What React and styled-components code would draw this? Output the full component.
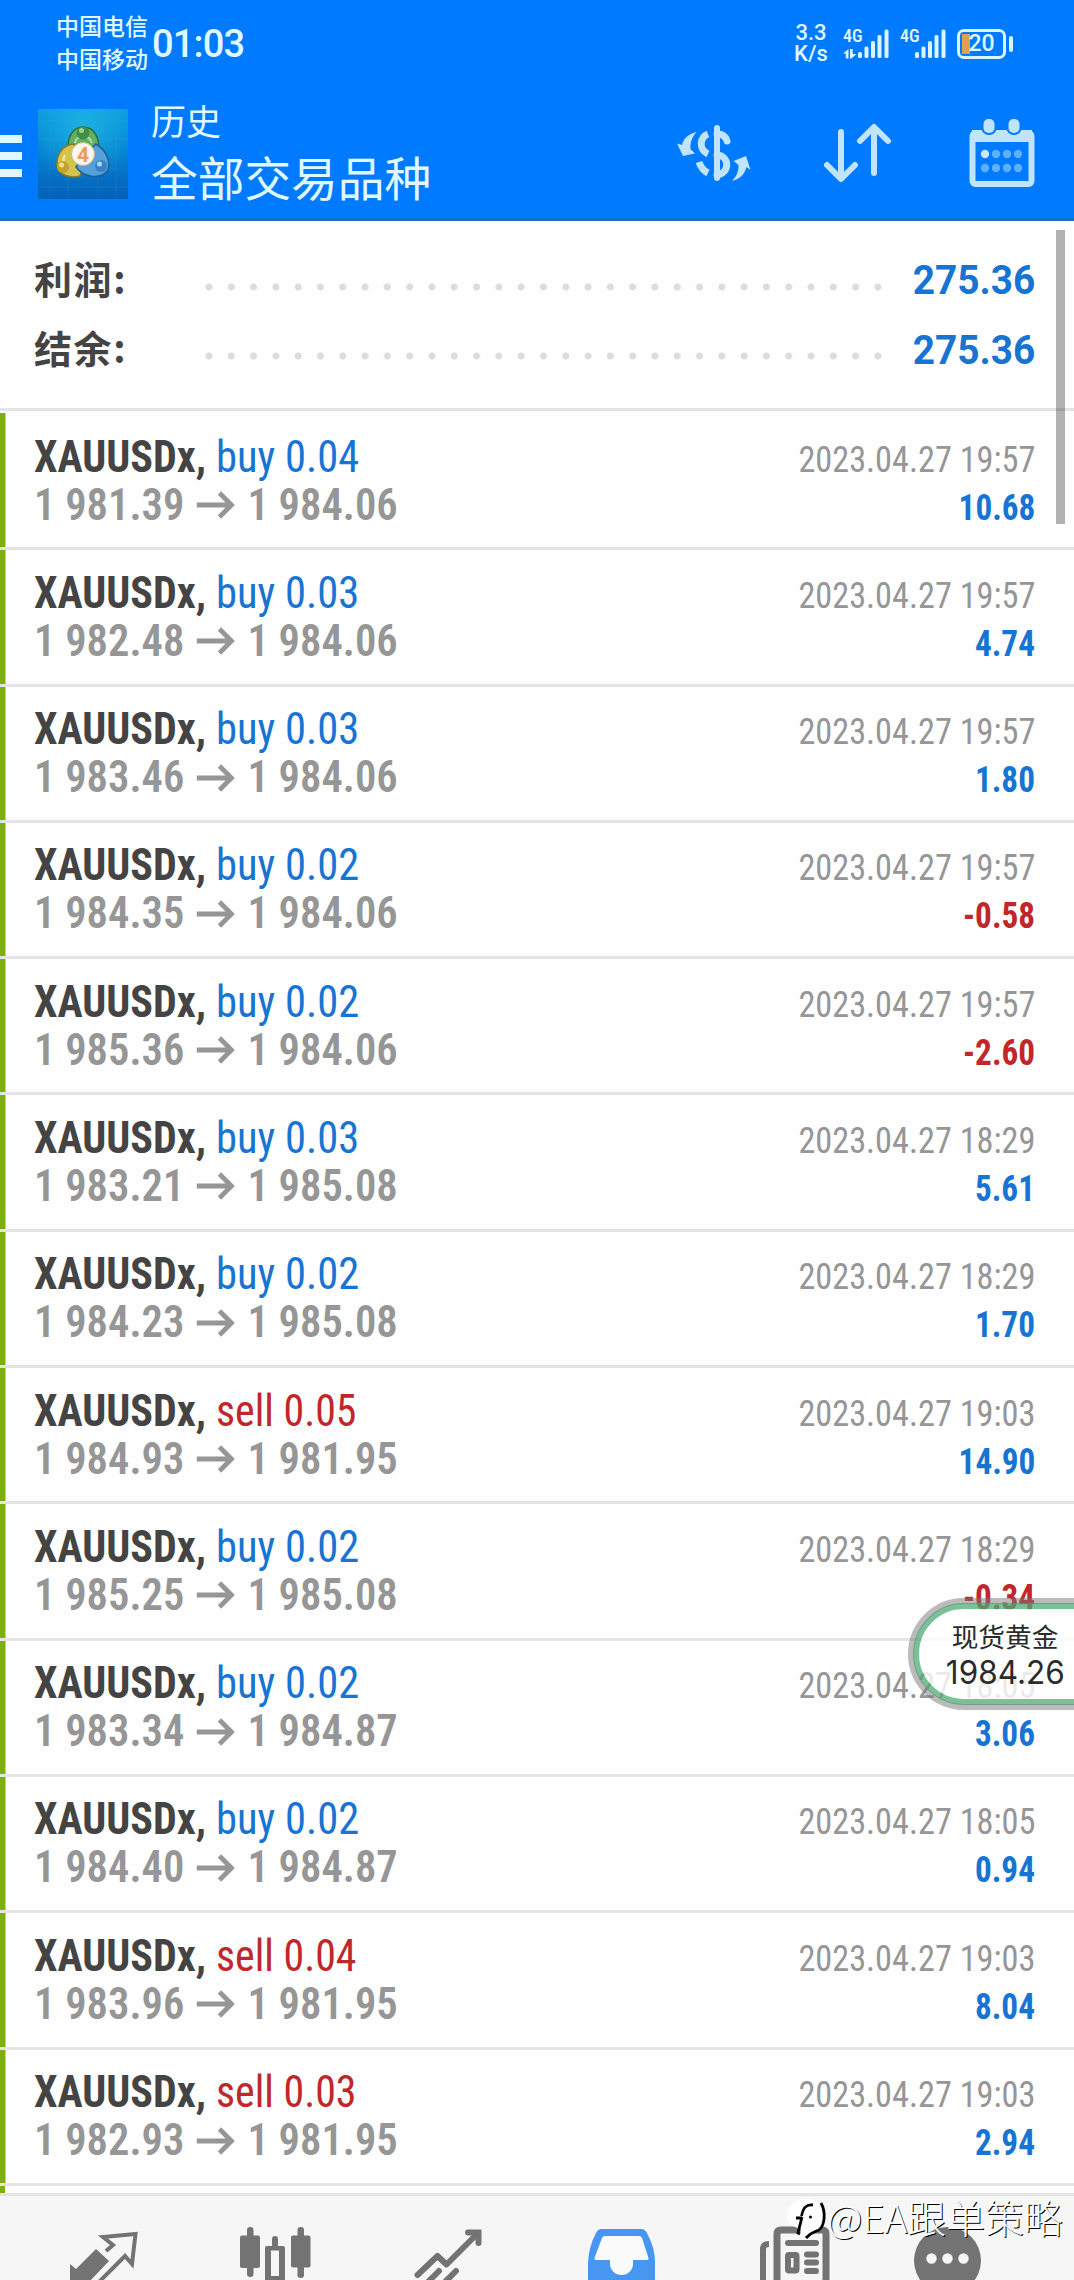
import React from 'react';
import styled, { createGlobalStyle } from 'styled-components';

const BLUE = '#1774d2';
const RED = '#c0262a';

const trades = [
  { id: 1, side: 'buy', lots: '0.04', open: '1 981.39', close: '1 984.06', time: '2023.04.27 19:57', profit: '10.68' },
  { id: 2, side: 'buy', lots: '0.03', open: '1 982.48', close: '1 984.06', time: '2023.04.27 19:57', profit: '4.74' },
  { id: 3, side: 'buy', lots: '0.03', open: '1 983.46', close: '1 984.06', time: '2023.04.27 19:57', profit: '1.80' },
  { id: 4, side: 'buy', lots: '0.02', open: '1 984.35', close: '1 984.06', time: '2023.04.27 19:57', profit: '-0.58' },
  { id: 5, side: 'buy', lots: '0.02', open: '1 985.36', close: '1 984.06', time: '2023.04.27 19:57', profit: '-2.60' },
  { id: 6, side: 'buy', lots: '0.03', open: '1 983.21', close: '1 985.08', time: '2023.04.27 18:29', profit: '5.61' },
  { id: 7, side: 'buy', lots: '0.02', open: '1 984.23', close: '1 985.08', time: '2023.04.27 18:29', profit: '1.70' },
  { id: 8, side: 'sell', lots: '0.05', open: '1 984.93', close: '1 981.95', time: '2023.04.27 19:03', profit: '14.90' },
  { id: 9, side: 'buy', lots: '0.02', open: '1 985.25', close: '1 985.08', time: '2023.04.27 18:29', profit: '-0.34' },
  { id: 10, side: 'buy', lots: '0.02', open: '1 983.34', close: '1 984.87', time: '2023.04.27 18:05', profit: '3.06' },
  { id: 11, side: 'buy', lots: '0.02', open: '1 984.40', close: '1 984.87', time: '2023.04.27 18:05', profit: '0.94' },
  { id: 12, side: 'sell', lots: '0.04', open: '1 983.96', close: '1 981.95', time: '2023.04.27 19:03', profit: '8.04' },
  { id: 13, side: 'sell', lots: '0.03', open: '1 982.93', close: '1 981.95', time: '2023.04.27 19:03', profit: '2.94' },
];

const totals = [
  { label: '利润:', value: '275.36' },
  { label: '结余:', value: '275.36' },
];

const LogoIcon = () => (
  <svg width="90" height="90" viewBox="0 0 90 90">
    <defs>
      <linearGradient id="logoBg" x1="0" y1="0" x2="0" y2="1">
        <stop offset="0" stopColor="#0a9be0" />
        <stop offset="0.5" stopColor="#0580cf" />
        <stop offset="1" stopColor="#0560b8" />
      </linearGradient>
      <radialGradient id="logoGlow" cx="0.5" cy="0.2" r="0.6">
        <stop offset="0" stopColor="#22b8e4" stopOpacity="0.8" />
        <stop offset="1" stopColor="#22b8e4" stopOpacity="0" />
      </radialGradient>
    </defs>
    <rect width="90" height="90" fill="url(#logoBg)" />
    <rect width="90" height="90" fill="url(#logoGlow)" />
    <path d="M12 0V90M30 0V90M60 0V90M78 0V90M0 12H90M0 30H90M0 60H90M0 78H90" stroke="#46b4ea" strokeOpacity="0.15" />
    <g strokeWidth="1.500">
      <path d="M30 42C29 28 35 18 45 18C56 18 62 28 61 44L45 48Z" fill="#64b063" stroke="#2c6f3c" />
      <path d="M35 35C24 36 18 47 19 57C21 66 32 70 42 67L48 46Z" fill="#d3c44e" stroke="#7f7b25" />
      <path d="M58 35C68 41 73 52 70 61C63 71 46 69 38 58L46 46Z" fill="#55a0d8" stroke="#1d5f9c" />
    </g>
    <path d="M37 34C38 26 51 25 54 34" fill="none" stroke="#b5dba3" strokeWidth="2" />
    <path d="M27 46C25 50 25 53 27 56" fill="none" stroke="#f3e99c" strokeWidth="2" />
    <circle cx="45" cy="24" r="6.500" fill="#3f8f49" />
    <circle cx="43.500" cy="21.500" r="2.500" fill="#9bd08f" />
    <circle cx="25" cy="58" r="6" fill="#c4a32c" />
    <circle cx="23.500" cy="56" r="2.500" fill="#f1e28a" />
    <circle cx="63" cy="57" r="6" fill="#3583c6" />
    <circle cx="61.500" cy="55" r="2.500" fill="#a9d8f5" />
    <circle cx="45" cy="45" r="11.500" fill="#fdf6ee" stroke="#c9b68c" />
    <text x="45" y="52.500" textAnchor="middle" fontFamily="Roboto" fontWeight="700" fontSize="21" fill="#ec9c5c">4</text>
  </svg>
);

const CurrencyIcon = () => (
  <svg width="78" height="60" viewBox="0 0 78 60" fill="none" stroke="#bfe4fc" strokeWidth="6" strokeLinecap="round">
    <path d="M42 5V55" />
    <path d="M33 11C25 14 23 26 33 31" strokeLinecap="butt" strokeWidth="7" />
    <path d="M42 11C48 11 51 14 52 18" strokeWidth="7" />
    <path d="M24 39C26 45 29 48 33 50" strokeWidth="7" strokeLinecap="butt" />
    <path d="M42 32C55 33 55 50 42 52" strokeWidth="7" />
    <path d="M21.500 9C12 11 8 17 7 22L2 20.500L8 33L20 30.500L15.500 26C15 20 17 14 21.500 9Z" fill="#bfe4fc" stroke="none" />
    <path d="M57 58C66 56 70 50 71.500 44L75.500 47L71 33L58.500 38L63.500 42C63.500 48 62 53 57 58Z" fill="#bfe4fc" stroke="none" />
  </svg>
);

const SortIcon = () => (
  <svg width="72" height="62" viewBox="0 0 72 62" fill="none" stroke="#bfe4fc" strokeWidth="6" strokeLinecap="round" strokeLinejoin="round">
    <path d="M19 10V56M5 43L19 57L33 43" />
    <path d="M52 51V6M38 19L52 5L66 19" />
  </svg>
);

const CalendarIcon = () => (
  <svg width="66" height="68" viewBox="0 0 66 68">
    <rect x="3.500" y="14" width="59" height="51" rx="3" fill="none" stroke="#bfe4fc" strokeWidth="6" />
    <path d="M3 11H63V23H3Z" fill="#bfe4fc" />
    <rect x="12" y="-2" width="16" height="18" rx="8" fill="#007aff" />
    <rect x="37" y="-2" width="16" height="18" rx="8" fill="#007aff" />
    <rect x="14.500" y="0" width="11" height="14" rx="5" fill="#bfe4fc" />
    <rect x="39.500" y="0" width="11" height="14" rx="5" fill="#bfe4fc" />
    {[16, 27, 38, 49].map((x) => (
      <g key={x} fill="#5eb0fd">
        <circle cx={x} cy="35" r="4.200" fill={x === 16 ? '#c8e9fd' : '#5eb0fd'} />
        <circle cx={x} cy="49" r="4.200" />
      </g>
    ))}
  </svg>
);

const SignalIcon = () => (
  <svg width="32" height="30" viewBox="0 0 32 30" fill="#d9f5ff">
    <rect x="0" y="23" width="4" height="6" rx="1.500" />
    <rect x="6.500" y="17.500" width="4" height="11.500" rx="1.500" />
    <rect x="13" y="12" width="4" height="17" rx="1.500" />
    <rect x="19.500" y="6" width="4" height="23" rx="1.500" />
    <rect x="26.500" y="0.500" width="4" height="28.500" rx="1.500" />
  </svg>
);

const DataArrows = () => (
  <svg width="14" height="10" viewBox="0 0 14 10" fill="#d9f5ff">
    <path d="M0 4.500L5.500 0V9.500H2.800V4.500Z" />
    <path d="M7 0H9.700V5H13.500L8.500 9.500H7Z" />
  </svg>
);

const PriceArrow = () => (
  <svg width="40" height="28" viewBox="0 0 40 28" fill="none" stroke="#969696" strokeWidth="5">
    <path d="M0 14H36M24 2L36.500 14L24 26" />
  </svg>
);

const QuotesIcon = () => (
  <svg width="173" height="84" viewBox="0 0 173 84">
    <path d="M53 68L59 73L79 53L92 65L72 86H53Z" fill="#737373" />
    <path d="M89 55L96 49L86 41L118.500 38L115 68L108 60L80 88" fill="none" stroke="#737373" strokeWidth="4" />
  </svg>
);

const ChartIcon = () => (
  <svg width="173" height="84" viewBox="0 0 173 84" fill="#737373">
    <rect x="50" y="39.500" width="20" height="32.500" rx="2" />
    <rect x="57" y="31" width="6.500" height="50" rx="3" />
    <rect x="82" y="40" width="6" height="14" rx="3" />
    <path d="M77 50H93Q95 50 95 52V90H75V52Q75 50 77 50ZM81 54.500V80H89V54.500Z" fillRule="evenodd" />
    <rect x="101" y="39.500" width="19.500" height="32" rx="2" />
    <rect x="107.500" y="31" width="6.500" height="51" rx="3" />
  </svg>
);

const TradeIcon = () => (
  <svg width="173" height="84" viewBox="0 0 173 84" fill="none" stroke="#737373" strokeWidth="6">
    <path d="M54.500 79L74.500 60L83.500 68.500L114 38" strokeLinejoin="round" strokeLinecap="round" />
    <path d="M105 36.500H115.500V47" strokeLinecap="round" />
    <path d="M76 75L62 89M93 75L79 89" strokeLinecap="round" />
  </svg>
);

const InboxIcon = () => (
  <svg width="173" height="84" viewBox="0 0 173 84">
    <path d="M65 33H105Q109 33 111 37Q119 52 119 66V90H52V66Q53 50 60 37Q62 33 65 33Z" fill="#4797f2" />
    <path d="M69 40H103Q105 40 106 42L112.500 62Q113 64 111 64H97V68A11.500 11 0 0 1 74 68V64H60Q58 64 58.500 62L66 42Q67 40 69 40Z" fill="#fafafa" />
  </svg>
);

const NewsIcon = () => (
  <svg width="173" height="84" viewBox="0 0 173 84" fill="none" stroke="#737373" strokeWidth="6">
    <path d="M54 88V53Q54 48 60 48" />
    <path d="M68 88V38Q68 34 72 34H113Q117 34 117 38V88" strokeWidth="7" />
    <rect x="79" y="59" width="8.500" height="15.500" rx="1" />
    <path d="M79 47H107M98 58.500H107M98 66.500H107M98 75H107" strokeLinecap="round" />
  </svg>
);

const MoreIcon = () => (
  <svg width="134" height="84" viewBox="0 0 134 84">
    <circle cx="65.500" cy="64.500" r="33.500" fill="#737373" />
    <path d="M36 78L40 90H60Z" fill="#737373" />
    <circle cx="49.500" cy="62.500" r="5.200" fill="#f6f6f6" />
    <circle cx="65.500" cy="62.500" r="5.200" fill="#f6f6f6" />
    <circle cx="81.500" cy="62.500" r="5.200" fill="#f6f6f6" />
  </svg>
);

const WatermarkIcon = () => (
  <svg width="44" height="46" viewBox="0 0 44 46">
    <path d="M20 3C31 3 38 10 38 20C38 30 33 35 27 36L22 43L19 38H14L15 33C6 31 1 26 1 20C1 10 9 3 20 3Z" fill="#fff" />
    <path d="M35 7C40 16 39 29 33 34C29 36 25 36 20 42" fill="none" stroke="#000" strokeWidth="2.800" />
    <path d="M27 9C20 8 17 12 15.500 20M10 22H16M16 21L12 37L14 38" fill="none" stroke="#000" strokeWidth="2.800" />
    <circle cx="24.500" cy="21" r="1.500" fill="#000" />
  </svg>
);

const tabs = [QuotesIcon, ChartIcon, TradeIcon, InboxIcon, NewsIcon, MoreIcon];

const App = () => {
  return (
    <Screen>
      <GlobalStyle />
      <Header>
        <StatusBar>
          <Carriers>
            <span>中国电信</span>
            <span>中国移动</span>
          </Carriers>
          <Clock>01:03</Clock>
          <StatusRight>
            <Speed>
              <span>3.3</span>
              <span>K/s</span>
            </Speed>
            <Network>
              <NetworkType>
                <span>4G</span>
                <DataArrows />
              </NetworkType>
              <SignalIcon />
            </Network>
            <Network>
              <NetworkType>
                <span>4G</span>
              </NetworkType>
              <SignalIcon />
            </Network>
            <Battery>20</Battery>
            <BatteryTip />
          </StatusRight>
        </StatusBar>
        <AppBar>
          <MenuButton>
            <i />
            <i />
            <i />
          </MenuButton>
          <LogoIcon />
          <Titles>
            <Title>历史</Title>
            <SubTitle>全部交易品种</SubTitle>
          </Titles>
          <Actions>
            <CurrencyIcon />
            <SortIcon />
            <CalendarIcon />
          </Actions>
        </AppBar>
      </Header>

      <Content>
        <Summary>
          {totals.map((total) => (
            <SummaryRow key={total.label}>
              <SummaryLabel>{total.label}</SummaryLabel>
              <Dots />
              <SummaryValue>{total.value}</SummaryValue>
            </SummaryRow>
          ))}
        </Summary>
        {trades.map((trade) => (
          <TradeRow key={trade.id}>
            <TradeInfo>
              <TradeLine>
                <Symbol>XAUUSDx,</Symbol>
                <Side $sell={trade.side === 'sell'}>{trade.side} {trade.lots}</Side>
              </TradeLine>
              <Prices>
                <span>{trade.open}</span>
                <PriceArrow />
                <span>{trade.close}</span>
              </Prices>
            </TradeInfo>
            <TradeResult>
              <Time>{trade.time}</Time>
              <Profit $loss={trade.profit.startsWith('-')}>{trade.profit}</Profit>
            </TradeResult>
          </TradeRow>
        ))}
        <NextRow />
        <ScrollThumb />
      </Content>

      <TabBar>
        {tabs.map((Icon, i) => (
          <Icon key={i} />
        ))}
      </TabBar>

      <PriceBubble>
        <BubbleName>现货黄金</BubbleName>
        <BubblePrice>1984.26</BubblePrice>
      </PriceBubble>
      <Watermark>
        <WatermarkIcon />
        <span>@EA跟单策略</span>
      </Watermark>
    </Screen>
  );
};

export default App;

const GlobalStyle = createGlobalStyle`
  body {
    margin: 0;
    background: #fefefe;
    font-family: Roboto, "Noto Sans CJK SC", sans-serif;
  }
  svg {
    display: block;
    flex: none;
  }
`;

const Screen = styled.div`
  position: relative;
  display: flex;
  flex-direction: column;
  width: 1074px;
  height: 2280px;
  overflow: hidden;
  background: #fefefe;
`;

const Header = styled.header`
  box-sizing: border-box;
  height: 221px;
  flex: none;
  background: #007aff;
  border-bottom: 3px solid #1a6fc4;
`;

const StatusBar = styled.div`
  display: flex;
  align-items: center;
  box-sizing: border-box;
  height: 87px;
  padding: 0 61px 0 56px;
  color: #e0f8ff;
`;

const Carriers = styled.div`
  display: flex;
  flex-direction: column;
  margin-top: -4px;
  font: 500 23px/33px "Noto Sans CJK SC", sans-serif;
`;

const Clock = styled.div`
  margin-left: 4px;
  font: 500 38px/44px Roboto, sans-serif;
  letter-spacing: -0.8px;
`;

const StatusRight = styled.div`
  display: flex;
  align-items: center;
  margin-left: auto;
`;

const Speed = styled.div`
  display: flex;
  flex-direction: column;
  align-items: center;
  width: 34px;
  margin-right: 15px;
  font: 500 22px/20.500px Roboto, sans-serif;
`;

const Network = styled.div`
  display: flex;
  align-items: flex-end;
  height: 30px;
  margin-right: 10px;
`;

const NetworkType = styled.div`
  display: flex;
  flex-direction: column;
  justify-content: space-between;
  width: 15px;
  height: 30px;
  font: 500 18px/14px "Roboto Condensed", sans-serif;
`;

const Battery = styled.div`
  box-sizing: border-box;
  width: 49px;
  height: 30px;
  border: 3px solid #d9f5ff;
  border-radius: 7px;
  background: linear-gradient(#e0a052, #e0a052) 2px center / 8px 20px no-repeat;
  font: 500 23px/24px Roboto, sans-serif;
  text-align: center;
`;

const BatteryTip = styled.div`
  width: 4px;
  height: 16px;
  margin-left: 3px;
  border-radius: 2px;
  background: #d9f5ff;
`;

const AppBar = styled.div`
  display: flex;
  align-items: flex-start;
  height: 131px;
  padding-top: 22px;

  > svg {
    margin-left: 16px;
  }
`;

const MenuButton = styled.div`
  display: flex;
  flex-direction: column;
  gap: 9px;
  width: 22px;
  margin-top: 26px;

  i {
    height: 8px;
    background: #e0f8ff;
  }
`;

const Titles = styled.div`
  display: flex;
  flex-direction: column;
  margin: -13px 0 0 23px;
  color: #e0f8ff;
  font-family: "Noto Sans CJK SC", sans-serif;
`;

const Title = styled.div`
  font-size: 35px;
  line-height: 48px;
`;

const SubTitle = styled.div`
  font-size: 46.700px;
  line-height: 64px;
`;

const Actions = styled.div`
  display: flex;
  align-items: center;
  margin: 10px 39px 0 auto;

  svg:nth-child(1) {
    margin-right: 69px;
  }
  svg:nth-child(2) {
    margin-right: 75px;
  }
`;

const Content = styled.main`
  position: relative;
  display: flex;
  flex-direction: column;
  flex: none;
  height: 1972px;
  overflow: hidden;
`;

const Summary = styled.section`
  box-sizing: border-box;
  height: 190px;
  flex: none;
  margin-bottom: 2px;
  padding: 24px 39px 0 34px;
  border-bottom: 3px solid #e4e4e4;
`;

const SummaryRow = styled.div`
  display: flex;
  align-items: center;
  height: 69.500px;
`;

const SummaryLabel = styled.div`
  width: 164px;
  margin-top: -4px;
  color: #444;
  font: 700 38px/56px "Noto Sans CJK SC", sans-serif;
  letter-spacing: 1.600px;
`;

const Dots = styled.div`
  width: 690px;
  height: 8px;
  margin-top: 14px;
  background: radial-gradient(circle at 11px 4px, #dcdcdc 3px, transparent 4px) 0 0 / 22.300px 8px repeat-x;
`;

const SummaryValue = styled.div`
  margin: 3px 0 0 auto;
  color: ${BLUE};
  font: 700 40px/50px Roboto, sans-serif;
  transform: scaleX(0.97);
  transform-origin: right;
`;

const TradeRow = styled.div`
  display: flex;
  justify-content: space-between;
  box-sizing: border-box;
  height: 136.300px;
  flex: none;
  padding: 17px 39px 0 33.500px;
  border-bottom: 3px solid #e4e4e4;
  background: linear-gradient(#7db00e, #7db00e) left top / 5.500px 100% no-repeat padding-box;
  font-family: "Roboto Condensed", sans-serif;

  &:nth-child(2) {
    height: 137.300px;
    padding-top: 18px;
  }
`;

const TradeInfo = styled.div`
  display: flex;
  flex-direction: column;
  padding-top: 1.500px;
`;

const TradeLine = styled.div`
  display: flex;
  gap: 13px;
  font-size: 44.500px;
  line-height: 48px;
`;

/* the app's face is a little narrower than Roboto Condensed */
const Symbol = styled.span`
  width: 169px;
  color: #444;
  font-weight: 700;
  transform: scaleX(0.945);
  transform-origin: left;
`;

const Side = styled.span`
  color: ${(p) => (p.$sell ? RED : BLUE)};
  transform: scaleX(${(p) => (p.$sell ? 0.94 : 0.955)});
  transform-origin: left;
`;

const Prices = styled.div`
  display: flex;
  align-items: center;
  gap: 13px;
  color: #969696;
  font-size: 44.500px;
  font-weight: 600;
  line-height: 49px;
  transform: scaleX(0.956);
  transform-origin: left;
`;

const TradeResult = styled.div`
  display: flex;
  flex-direction: column;
  align-items: flex-end;
  padding-top: 4.500px;
  font-size: 36.500px;
  line-height: 48px;
`;

const Time = styled.span`
  color: #969696;
  transform: scaleX(0.939);
  transform-origin: right;
`;

const Profit = styled.span`
  color: ${(p) => (p.$loss ? RED : BLUE)};
  font-weight: 700;
  transform: scaleX(0.91);
  transform-origin: right;
`;

const NextRow = styled.div`
  flex: 1;
  border-left: 5.500px solid #7db00e;
`;

const ScrollThumb = styled.div`
  position: absolute;
  top: 9px;
  right: 9px;
  width: 9px;
  height: 294px;
  background: rgba(0, 0, 0, 0.3);
`;

const TabBar = styled.nav`
  display: flex;
  flex: 1;
  padding-left: 17px;
  border-top: 3px solid #e4e4e4;
  background: #f6f6f6;
`;

const PriceBubble = styled.div`
  position: absolute;
  top: 1598px;
  left: 908px;
  box-sizing: border-box;
  display: flex;
  flex-direction: column;
  align-items: center;
  width: 220px;
  height: 112px;
  padding: 8px 42px 0 16px;
  border: 11px solid transparent;
  border-radius: 56px;
  background: rgba(255, 255, 255, 0.8) padding-box;
  color: #2b2b2b;

  &::before {
    content: '';
    position: absolute;
    inset: -6px;
    border: 6px solid rgba(76, 172, 116, 0.75);
    border-radius: 51px;
  }
  &::after {
    content: '';
    position: absolute;
    inset: -11px;
    border: 6px solid rgba(120, 120, 120, 0.5);
    border-radius: 56px;
  }
`;

const BubbleName = styled.div`
  font: 400 26.700px/37px "Noto Sans CJK SC", sans-serif;
`;

const BubblePrice = styled.div`
  font: 400 32.500px/37px Inter, sans-serif;
  transform: scaleX(0.97);
`;

const Watermark = styled.div`
  position: absolute;
  top: 2196px;
  left: 786px;
  display: flex;
  align-items: center;
  color: #fff;
  font: 300 38.800px/40px "Noto Sans CJK SC", sans-serif;
  text-shadow: 1px 1px 0 #000;

  span {
    margin: -7px 0 0 -3px;
  }
`;
